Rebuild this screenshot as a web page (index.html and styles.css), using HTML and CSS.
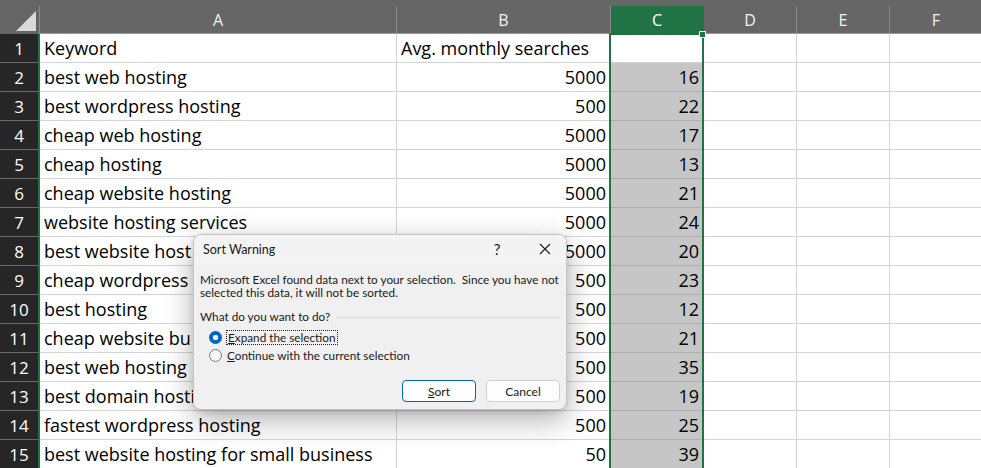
FILE: index.html
```html
<!DOCTYPE html>
<html lang="en">
<head>
  <meta charset="UTF-8" />
  <title>Sort Warning</title>
  <link rel="stylesheet" href="styles.css">
</head>
<body>

  <div class="sheet">
    <div class="row head">
      <div class="corner">
        <svg width="20" height="20" viewBox="0 0 20 20"><polygon points="0,20 20,20 20,0" fill="#d9d9d9"/></svg>
      </div>
      <div class="col">A</div>
      <div class="col">B</div>
      <div class="col on">C</div>
      <div class="col">D</div>
      <div class="col">E</div>
      <div class="col">F</div>
    </div>

    <div class="row"><div class="rh">1</div><div class="cell">Keyword</div><div class="cell">Avg. monthly searches</div><div class="cell"></div><div class="cell"></div><div class="cell"></div><div class="cell"></div></div>
    <div class="row"><div class="rh">2</div><div class="cell">best web hosting</div><div class="cell num">5000</div><div class="cell num sel">16</div><div class="cell"></div><div class="cell"></div><div class="cell"></div></div>
    <div class="row"><div class="rh">3</div><div class="cell">best wordpress hosting</div><div class="cell num">500</div><div class="cell num sel">22</div><div class="cell"></div><div class="cell"></div><div class="cell"></div></div>
    <div class="row"><div class="rh">4</div><div class="cell">cheap web hosting</div><div class="cell num">5000</div><div class="cell num sel">17</div><div class="cell"></div><div class="cell"></div><div class="cell"></div></div>
    <div class="row"><div class="rh">5</div><div class="cell">cheap hosting</div><div class="cell num">5000</div><div class="cell num sel">13</div><div class="cell"></div><div class="cell"></div><div class="cell"></div></div>
    <div class="row"><div class="rh">6</div><div class="cell">cheap website hosting</div><div class="cell num">5000</div><div class="cell num sel">21</div><div class="cell"></div><div class="cell"></div><div class="cell"></div></div>
    <div class="row"><div class="rh">7</div><div class="cell">website hosting services</div><div class="cell num">5000</div><div class="cell num sel">24</div><div class="cell"></div><div class="cell"></div><div class="cell"></div></div>
    <!-- rows 8-13: only the part left of the dialog is visible -->
    <div class="row"><div class="rh">8</div><div class="cell">best website host</div><div class="cell num">5000</div><div class="cell num sel">20</div><div class="cell"></div><div class="cell"></div><div class="cell"></div></div>
    <div class="row"><div class="rh">9</div><div class="cell">cheap wordpress</div><div class="cell num">500</div><div class="cell num sel">23</div><div class="cell"></div><div class="cell"></div><div class="cell"></div></div>
    <div class="row"><div class="rh">10</div><div class="cell">best hosting</div><div class="cell num">500</div><div class="cell num sel">12</div><div class="cell"></div><div class="cell"></div><div class="cell"></div></div>
    <div class="row"><div class="rh">11</div><div class="cell">cheap website bu</div><div class="cell num">500</div><div class="cell num sel">21</div><div class="cell"></div><div class="cell"></div><div class="cell"></div></div>
    <div class="row"><div class="rh">12</div><div class="cell">best web hosting</div><div class="cell num">500</div><div class="cell num sel">35</div><div class="cell"></div><div class="cell"></div><div class="cell"></div></div>
    <div class="row"><div class="rh">13</div><div class="cell">best domain hosti</div><div class="cell num">500</div><div class="cell num sel">19</div><div class="cell"></div><div class="cell"></div><div class="cell"></div></div>
    <div class="row"><div class="rh">14</div><div class="cell">fastest wordpress hosting</div><div class="cell num">500</div><div class="cell num sel">25</div><div class="cell"></div><div class="cell"></div><div class="cell"></div></div>
    <div class="row"><div class="rh">15</div><div class="cell">best website hosting for small business</div><div class="cell num">50</div><div class="cell num sel">39</div><div class="cell"></div><div class="cell"></div><div class="cell"></div></div>

    <!-- column C selection outline + fill handle -->
    <div class="selection"></div>
    <div class="handle"></div>

    <div class="dialog">
      <div class="dlg-title">
        <span class="dlg-name">Sort Warning</span>
        <span class="dlg-btn help">?</span>
        <span class="dlg-btn close">
          <svg width="12" height="12" viewBox="0 0 12 12"><path d="M1 1 L11 11 M11 1 L1 11" stroke="#1a1a1a" stroke-width="1.1" fill="none"/></svg>
        </span>
      </div>
      <div class="dlg-body">
        <p class="msg">Microsoft Excel found data next to your selection.&nbsp; Since you have not<br>selected this data, it will not be sorted.</p>
        <div class="group">
          <span>What do you want to do?</span>
          <span class="group-line"></span>
        </div>
        <div class="radios">
          <div class="radio">
            <span class="dot checked"></span>
            <span class="focus"><u>E</u>xpand the selection</span>
          </div>
          <div class="radio">
            <span class="dot"></span>
            <span><u>C</u>ontinue with the current selection</span>
          </div>
        </div>
        <div class="actions">
          <button class="btn primary"><u>S</u>ort</button>
          <button class="btn">Cancel</button>
        </div>
      </div>
    </div>
  </div>

</body>
</html>
```

FILE: styles.css
```css
body {
  margin: 0;
  background: #fff;
  font-family: 'Open Sans', sans-serif;
  overflow: hidden;
}

.sheet {
  position: relative;
  width: 981px;
  height: 468px;
  overflow: hidden;
}

.row {
  display: grid;
  grid-template-columns: 40px 357px 214px 93px 93px 93px 93px;
  height: 29px;
}

/* column headers */
.head {
  height: 34px;
  background: #666;
}

.corner {
  display: flex;
  align-items: flex-end;
  justify-content: flex-end;
  padding: 0 3px 3px 0;
  border-right: 1px solid #8c8c8c;
  margin-top: 6px;
}

.col {
  margin-top: 6px;
  display: flex;
  align-items: center;
  justify-content: center;
  color: #f2f2f2;
  font-size: 16px;
  border-right: 1px solid #8c8c8c;
  border-bottom: 1px solid #9a9a9a;
}

.col.on {
  background: #217346;
  border-right-color: #217346;
  border-bottom-color: #217346;
  color: #fff;
}

/* row headers */
.rh {
  background: #262626;
  color: #fff;
  font-size: 17px;
  line-height: 27px;
  padding-top: 1px;
  text-align: center;
  border-right: 2px solid #217346;
  border-bottom: 1px solid #6a6a6a;
}

.cell {
  font-size: 18px;
  line-height: 27px;
  padding: 1px 4px 0;
  color: #000;
  white-space: nowrap;
  overflow: hidden;
  border-right: 1px solid #d4d4d4;
  border-bottom: 1px solid #d4d4d4;
}

.num {
  text-align: right;
}

.sel {
  background: #c6c6c6;
  border-bottom-color: #adadad;
}

.selection {
  position: absolute;
  left: 609px;
  top: 33px;
  bottom: 0;
  width: 95px;
  box-sizing: border-box;
  border: 2px solid #217346;
  border-bottom: none;
  pointer-events: none;
}

.handle {
  position: absolute;
  left: 699px;
  top: 31px;
  width: 5px;
  height: 5px;
  background: #217346;
  border: 1px solid #fff;
}

/* sort warning dialog */
.dialog {
  position: absolute;
  left: 193px;
  top: 234px;
  width: 374px;
  height: 176px;
  box-sizing: border-box;
  background: #f0f0f0;
  border: 1px solid #c4c4c4;
  border-radius: 8px;
  overflow: hidden;
  box-shadow: 0 10px 30px rgba(0, 0, 0, 0.3), 0 2px 6px rgba(0, 0, 0, 0.12);
  font-family: 'Lato', sans-serif;
  font-size: 11.75px;
  color: #1a1a1a;
}

.dlg-title {
  display: flex;
  align-items: center;
  height: 28px;
  background: #f3f3f3;
}

.dlg-name {
  padding-left: 9px;
  padding-top: 1px;
  font-size: 12.5px;
}

.dlg-btn {
  width: 46px;
  height: 28px;
  display: flex;
  align-items: center;
  justify-content: center;
}

.help {
  margin-left: auto;
  margin-right: 2px;
  font-size: 15px;
}

.close {
  margin-right: -2px;
}

.dlg-body {
  padding: 0 6px;
}

.msg {
  margin: 10px 0 0;
  line-height: 13px;
  white-space: nowrap;
}

.group {
  display: flex;
  align-items: center;
  margin-top: 11px;
  line-height: 14px;
}

.group-line {
  flex: 1;
  height: 1px;
  margin-left: 6px;
  background: #dadada;
}

.radios {
  margin-top: 4px;
}

.radio {
  display: flex;
  align-items: center;
  height: 18px;
  padding-left: 9px;
}

.dot {
  width: 11px;
  height: 11px;
  border: 1px solid #7a7a7a;
  border-radius: 50%;
  background: #f7f7f7;
  margin-right: 5px;
}

.dot.checked {
  width: 13px;
  height: 13px;
  border: none;
  background: radial-gradient(circle, #fff 0 2.5px, #0067c0 3px);
}

.focus {
  outline: 1px dotted #222;
  padding: 0 1px;
  line-height: 13px;
}

.actions {
  display: flex;
  justify-content: flex-end;
  gap: 10px;
  margin-top: 16px;
}

.btn {
  width: 74px;
  height: 22px;
  padding: 0;
  font-family: 'Lato', sans-serif;
  font-size: 12px;
  color: #1a1a1a;
  background: #fdfdfd;
  border: 1px solid #d0d0d0;
  border-radius: 4px;
}

.btn.primary {
  border-color: #0067c0;
}
```
